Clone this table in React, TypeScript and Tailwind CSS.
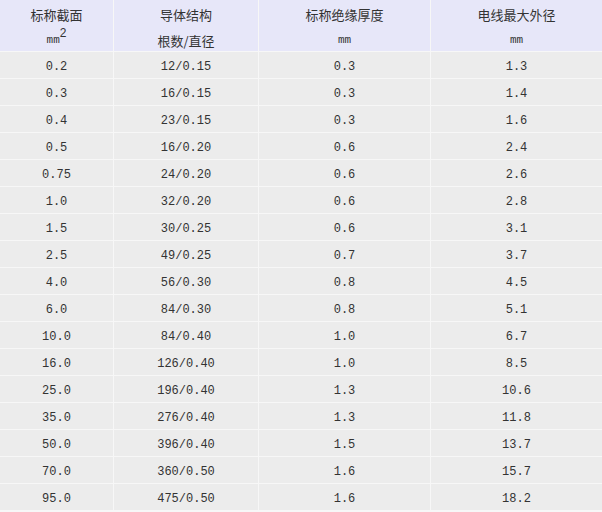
const rows: [string, string, string, string][] = [
  ["0.2", "12/0.15", "0.3", "1.3"],
  ["0.3", "16/0.15", "0.3", "1.4"],
  ["0.4", "23/0.15", "0.3", "1.6"],
  ["0.5", "16/0.20", "0.6", "2.4"],
  ["0.75", "24/0.20", "0.6", "2.6"],
  ["1.0", "32/0.20", "0.6", "2.8"],
  ["1.5", "30/0.25", "0.6", "3.1"],
  ["2.5", "49/0.25", "0.7", "3.7"],
  ["4.0", "56/0.30", "0.8", "4.5"],
  ["6.0", "84/0.30", "0.8", "5.1"],
  ["10.0", "84/0.40", "1.0", "6.7"],
  ["16.0", "126/0.40", "1.0", "8.5"],
  ["25.0", "196/0.40", "1.3", "10.6"],
  ["35.0", "276/0.40", "1.3", "11.8"],
  ["50.0", "396/0.40", "1.5", "13.7"],
  ["70.0", "360/0.50", "1.6", "15.7"],
  ["95.0", "475/0.50", "1.6", "18.2"],
];

const HeadCell = ({ top, bottom }: { top: string; bottom: React.ReactNode }) => (
  <div className="h-[51px] bg-[#e7e7f9] flex flex-col items-center text-[13px] text-[#333] font-['Noto_Sans_CJK_SC',sans-serif]">
    <div className="h-[30px] flex items-center">{top}</div>
    <div className="h-[21px] flex items-center">{bottom}</div>
  </div>
);

const Unit = ({ sup }: { sup?: boolean }) => (
  <span className="font-['Liberation_Mono',monospace] text-[11px] text-[#333]">
    mm{sup && <sup className="text-[12px] font-['Liberation_Sans',sans-serif]">2</sup>}
  </span>
);

export default function App() {
  return (
    <div className="w-[602px] h-[512px] bg-[#f7f7f7] overflow-hidden">
      <div className="grid grid-cols-[113px_144px_171px_171px] gap-px">
        <HeadCell top="标称截面" bottom={<Unit sup />} />
        <HeadCell top="导体结构" bottom="根数/直径" />
        <HeadCell top="标称绝缘厚度" bottom={<Unit />} />
        <HeadCell top="电线最大外径" bottom={<Unit />} />
        {rows.map((r, i) =>
          r.map((c, j) => (
            <div
              key={`${i}-${j}`}
              className="h-[26px] pt-[3px] bg-[#ececec] flex items-center justify-center text-[12px] text-[#333] font-['Liberation_Mono',monospace]"
            >
              {c}
            </div>
          ))
        )}
      </div>
    </div>
  );
}
